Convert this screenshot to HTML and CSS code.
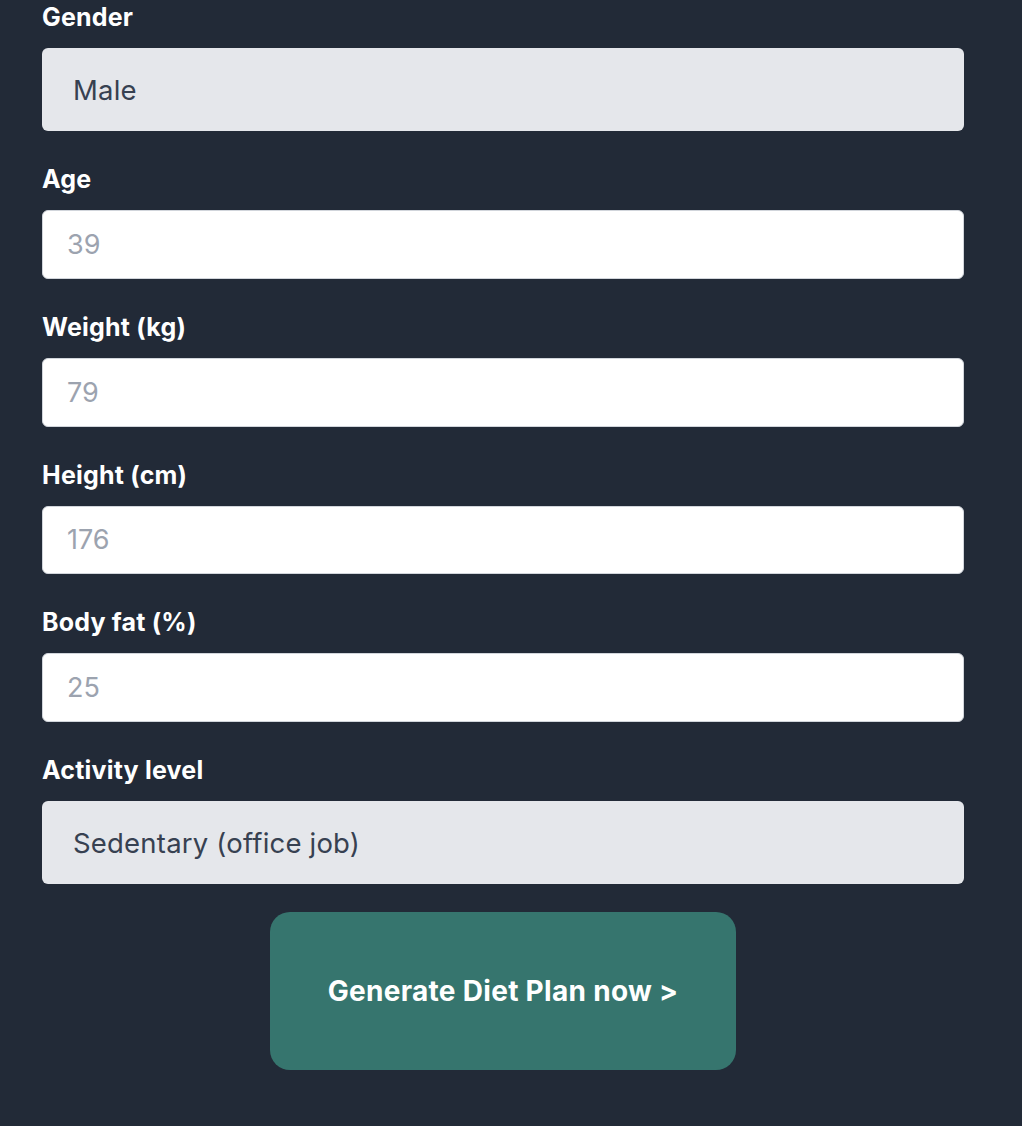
FILE: index.html
```html
<!DOCTYPE html>
<html lang="en">
<head>
<meta charset="utf-8">
<title>Diet Plan</title>
<link rel="stylesheet" href="styles.css">
</head>
<body>
<form class="form">
  <div class="field">
    <label class="label" for="gender">Gender</label>
    <select class="select" id="gender"><option>Male</option><option>Female</option></select>
  </div>
  <div class="field">
    <label class="label" for="age">Age</label>
    <input class="input" id="age" type="text" placeholder="39">
  </div>
  <div class="field">
    <label class="label" for="weight">Weight (kg)</label>
    <input class="input" id="weight" type="text" placeholder="79">
  </div>
  <div class="field">
    <label class="label" for="height">Height (cm)</label>
    <input class="input" id="height" type="text" placeholder="176">
  </div>
  <div class="field">
    <label class="label" for="fat">Body fat (%)</label>
    <input class="input" id="fat" type="text" placeholder="25">
  </div>
  <div class="field">
    <label class="label" for="activity">Activity level</label>
    <select class="select" id="activity"><option>Sedentary (office job)</option></select>
  </div>
  <div class="actions">
    <button class="button" type="button">Generate Diet Plan now &gt;</button>
  </div>
</form>
</body>
</html>
```
FILE: styles.css
```css
html, body {
  margin: 0;
  padding: 0;
  background: #222a37;
  font-family: Inter, "Noto Sans", sans-serif;
}
.form {
  width: 922px;
  margin: 1px 0 0 42px;
  display: flex;
  flex-direction: column;
  gap: 32px;
}
.field {
  display: flex;
  flex-direction: column;
}
.label {
  color: #ffffff;
  font-weight: 700;
  font-size: 25px;
  letter-spacing: 0.2px;
  line-height: 28px;
  padding-top: 2px;
  margin-bottom: 17px;
}
.select {
  appearance: none;
  -webkit-appearance: none;
  height: 83px;
  border: none;
  border-radius: 6px;
  background: #e5e7eb;
  color: #374151;
  font-family: Inter, "Noto Sans", sans-serif;
  font-size: 27.5px;
  letter-spacing: 0.2px;
  padding: 0 31px;
  margin: 0;
}
.input {
  box-sizing: border-box;
  height: 68.75px;
  border: 1px solid #d1d5db;
  border-radius: 6px;
  background: #ffffff;
  color: #374151;
  font-family: Inter, "Noto Sans", sans-serif;
  font-size: 27px;
  padding: 0 24px;
  margin: 0;
}
.input::placeholder {
  color: #9ca3af;
}
.actions {
  display: flex;
  justify-content: center;
  margin-top: -4px;
}
.button {
  width: 466px;
  height: 158px;
  border: none;
  border-radius: 20px;
  background: #36756e;
  color: #ffffff;
  font-family: Inter, "Noto Sans", sans-serif;
  font-weight: 700;
  font-size: 28px;
  letter-spacing: 0.3px;
}
```
